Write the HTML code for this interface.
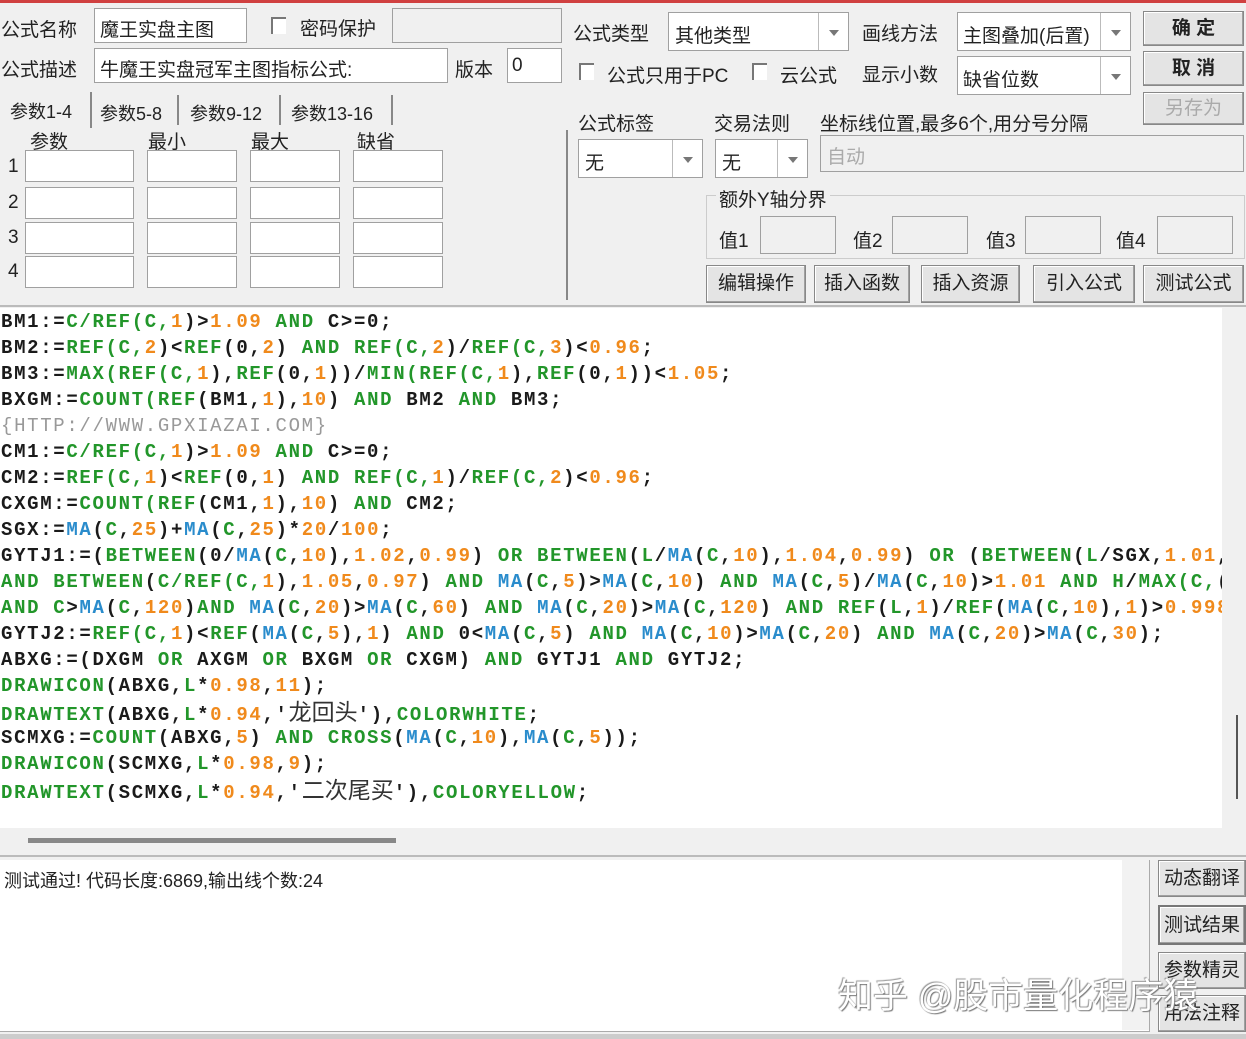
<!DOCTYPE html>
<html><head><meta charset="utf-8"><style>
*{margin:0;padding:0;box-sizing:border-box}
body{width:1246px;height:1039px;background:#f0f0f0;position:relative;overflow:hidden;font-family:"Liberation Sans","Noto Sans CJK SC",sans-serif;font-size:19px;color:#222}
.a{position:absolute}
.in{position:absolute;background:#fff;border:1px solid #a0a0a0}
.lb{position:absolute;white-space:nowrap;font-size:19px}
.btn{position:absolute;background:#e4e4e4;border:1px solid #888;box-shadow:inset -1px -1px 0 #a0a0a0,inset 1px 1px 0 #fff;text-align:center;font-size:19px;white-space:nowrap}
.cb{position:absolute;width:15px;height:17px;border-left:2px solid #777;border-top:2px solid #777;background:#fff}
.dd{position:absolute;right:0;top:0;bottom:0;width:30px;border-left:1px solid #bbb}
.dd:after{content:"";position:absolute;left:10px;top:50%;margin-top:-2px;border:5px solid transparent;border-top:6px solid #777}
#code{position:absolute;left:0;top:308px;width:1222px;height:520px;background:#fff;overflow:hidden}
#code div{position:absolute;left:1px;white-space:pre;font-family:"Liberation Mono",monospace;font-weight:bold;font-size:19px;letter-spacing:1.67px;color:#1a1a1a;line-height:26px}
.g{color:#22962a}.o{color:#f08a1c}.b{color:#2a8ccc}
#code .y{color:#999;font-weight:normal}
.z{font-family:"Liberation Sans","Noto Sans CJK SC",sans-serif;font-weight:normal;letter-spacing:0;font-size:23px;color:#333}
</style></head><body>
<div class="a" style="left:0;top:0;width:1246px;height:3px;background:#d04040"></div>

<div class="lb" style="left:1px;top:15px">公式名称</div>
<div class="in" style="left:94px;top:8px;width:153px;height:35px"><span class="lb" style="left:5px;top:6px">魔王实盘主图</span></div>
<div class="cb" style="left:271px;top:17px"></div>
<div class="lb" style="left:300px;top:14px">密码保护</div>
<div class="in" style="left:392px;top:8px;width:170px;height:35px;background:#f0f0f0"></div>
<div class="lb" style="left:1px;top:55px">公式描述</div>
<div class="in" style="left:94px;top:48px;width:354px;height:35px"><span class="lb" style="left:5px;top:6px">牛魔王实盘冠军主图指标公式:</span></div>
<div class="lb" style="left:455px;top:55px">版本</div>
<div class="in" style="left:507px;top:48px;width:55px;height:35px"><span class="lb" style="left:4px;top:6px">0</span></div>

<div class="lb" style="left:10px;top:98px;font-size:18px">参数1-4</div>
<div class="a" style="left:90px;top:92px;width:2px;height:36px;background:#888"></div>
<div class="lb" style="left:100px;top:100px;font-size:18px">参数5-8</div>
<div class="a" style="left:177px;top:95px;width:2px;height:30px;background:#888"></div>
<div class="lb" style="left:190px;top:100px;font-size:18px">参数9-12</div>
<div class="a" style="left:279px;top:95px;width:2px;height:30px;background:#888"></div>
<div class="lb" style="left:291px;top:100px;font-size:18px">参数13-16</div>
<div class="a" style="left:391px;top:95px;width:2px;height:30px;background:#888"></div>
<div class="a" style="left:566px;top:130px;width:2px;height:170px;background:#888"></div>
<div class="lb" style="left:30px;top:127px">参数</div>
<div class="lb" style="left:148px;top:127px">最小</div>
<div class="lb" style="left:251px;top:127px">最大</div>
<div class="lb" style="left:357px;top:127px">缺省</div>
<div class="lb" style="left:8px;top:156px">1</div><div class="lb" style="left:8px;top:192px">2</div><div class="lb" style="left:8px;top:227px">3</div><div class="lb" style="left:8px;top:261px">4</div>
<div class="in" style="left:25px;top:150px;width:109px;height:32px"></div><div class="in" style="left:147px;top:150px;width:90px;height:32px"></div><div class="in" style="left:250px;top:150px;width:90px;height:32px"></div><div class="in" style="left:353px;top:150px;width:90px;height:32px"></div>
<div class="in" style="left:25px;top:187px;width:109px;height:32px"></div><div class="in" style="left:147px;top:187px;width:90px;height:32px"></div><div class="in" style="left:250px;top:187px;width:90px;height:32px"></div><div class="in" style="left:353px;top:187px;width:90px;height:32px"></div>
<div class="in" style="left:25px;top:222px;width:109px;height:32px"></div><div class="in" style="left:147px;top:222px;width:90px;height:32px"></div><div class="in" style="left:250px;top:222px;width:90px;height:32px"></div><div class="in" style="left:353px;top:222px;width:90px;height:32px"></div>
<div class="in" style="left:25px;top:256px;width:109px;height:32px"></div><div class="in" style="left:147px;top:256px;width:90px;height:32px"></div><div class="in" style="left:250px;top:256px;width:90px;height:32px"></div><div class="in" style="left:353px;top:256px;width:90px;height:32px"></div>

<div class="lb" style="left:573px;top:19px">公式类型</div>
<div class="in" style="left:668px;top:12px;width:181px;height:39px"><span class="lb" style="left:6px;top:8px">其他类型</span><div class="dd"></div></div>
<div class="lb" style="left:862px;top:19px">画线方法</div>
<div class="in" style="left:957px;top:12px;width:174px;height:39px"><span class="lb" style="left:5px;top:8px">主图叠加(后置)</span><div class="dd"></div></div>
<div class="cb" style="left:579px;top:63px"></div>
<div class="lb" style="left:607px;top:61px">公式只用于PC</div>
<div class="cb" style="left:752px;top:63px"></div>
<div class="lb" style="left:780px;top:61px">云公式</div>
<div class="lb" style="left:862px;top:60px">显示小数</div>
<div class="in" style="left:957px;top:56px;width:174px;height:39px"><span class="lb" style="left:5px;top:8px">缺省位数</span><div class="dd"></div></div>
<div class="btn" style="left:1143px;top:11px;width:101px;height:35px;line-height:33px;font-weight:bold">确 定</div>
<div class="btn" style="left:1143px;top:51px;width:101px;height:35px;line-height:33px;font-weight:bold">取 消</div>
<div class="btn" style="left:1143px;top:92px;width:101px;height:33px;line-height:31px;color:#aaa">另存为</div>

<div class="lb" style="left:578px;top:109px">公式标签</div>
<div class="lb" style="left:714px;top:109px">交易法则</div>
<div class="lb" style="left:820px;top:109px">坐标线位置,最多6个,用分号分隔</div>
<div class="in" style="left:578px;top:139px;width:125px;height:39px"><span class="lb" style="left:6px;top:8px">无</span><div class="dd"></div></div>
<div class="in" style="left:715px;top:139px;width:93px;height:39px"><span class="lb" style="left:6px;top:8px">无</span><div class="dd"></div></div>
<div class="in" style="left:820px;top:135px;width:424px;height:37px;background:#f0f0f0"><span class="lb" style="left:6px;top:6px;color:#aaa">自动</span></div>
<div class="a" style="left:706px;top:195px;width:539px;height:64px;border:1px solid #ccc"></div>
<div class="lb" style="left:716px;top:185px;background:#f0f0f0;padding:0 3px">额外Y轴分界</div>
<div class="lb" style="left:719px;top:226px">值1</div><div class="in" style="left:760px;top:216px;width:76px;height:38px;background:#f0f0f0"></div>
<div class="lb" style="left:853px;top:226px">值2</div><div class="in" style="left:892px;top:216px;width:76px;height:38px;background:#f0f0f0"></div>
<div class="lb" style="left:986px;top:226px">值3</div><div class="in" style="left:1025px;top:216px;width:76px;height:38px;background:#f0f0f0"></div>
<div class="lb" style="left:1116px;top:226px">值4</div><div class="in" style="left:1157px;top:216px;width:76px;height:38px;background:#f0f0f0"></div>
<div class="btn" style="left:706px;top:265px;width:100px;height:38px;line-height:36px">编辑操作</div>
<div class="btn" style="left:814px;top:265px;width:96px;height:38px;line-height:36px">插入函数</div>
<div class="btn" style="left:921px;top:265px;width:99px;height:38px;line-height:36px">插入资源</div>
<div class="btn" style="left:1033px;top:265px;width:102px;height:38px;line-height:36px">引入公式</div>
<div class="btn" style="left:1143px;top:265px;width:101px;height:38px;line-height:36px">测试公式</div>
<div class="a" style="left:0;top:305px;width:1246px;height:2px;background:#bbb"></div>

<div id="code">
<div style="top:1px">BM1:=<span class="g">C/REF(C,</span><span class="o">1</span>)&gt;<span class="o">1.09</span> <span class="g">AND</span> C&gt;=0;</div>
<div style="top:27px">BM2:=<span class="g">REF(C,</span><span class="o">2</span>)&lt;<span class="g">REF</span>(0,<span class="o">2</span>) <span class="g">AND REF(C,</span><span class="o">2</span>)/<span class="g">REF(C,</span><span class="o">3</span>)&lt;<span class="o">0.96</span>;</div>
<div style="top:53px">BM3:=<span class="g">MAX(REF(C,</span><span class="o">1</span>),<span class="g">REF</span>(0,<span class="o">1</span>))/<span class="g">MIN(REF(C,</span><span class="o">1</span>),<span class="g">REF</span>(0,<span class="o">1</span>))&lt;<span class="o">1.05</span>;</div>
<div style="top:79px">BXGM:=<span class="g">COUNT(REF</span>(BM1,<span class="o">1</span>),<span class="o">10</span>) <span class="g">AND</span> BM2 <span class="g">AND</span> BM3;</div>
<div style="top:105px" class="y">{HTTP://WWW.GPXIAZAI.COM}</div>
<div style="top:131px">CM1:=<span class="g">C/REF(C,</span><span class="o">1</span>)&gt;<span class="o">1.09</span> <span class="g">AND</span> C&gt;=0;</div>
<div style="top:157px">CM2:=<span class="g">REF(C,</span><span class="o">1</span>)&lt;<span class="g">REF</span>(0,<span class="o">1</span>) <span class="g">AND REF(C,</span><span class="o">1</span>)/<span class="g">REF(C,</span><span class="o">2</span>)&lt;<span class="o">0.96</span>;</div>
<div style="top:183px">CXGM:=<span class="g">COUNT(REF</span>(CM1,<span class="o">1</span>),<span class="o">10</span>) <span class="g">AND</span> CM2;</div>
<div style="top:209px">SGX:=<span class="b">MA</span>(<span class="g">C</span>,<span class="o">25</span>)+<span class="b">MA</span>(<span class="g">C</span>,<span class="o">25</span>)*<span class="o">20</span>/<span class="o">100</span>;</div>
<div style="top:235px">GYTJ1:=(<span class="g">BETWEEN</span>(0/<span class="b">MA</span>(<span class="g">C</span>,<span class="o">10</span>),<span class="o">1.02</span>,<span class="o">0.99</span>) <span class="g">OR BETWEEN</span>(<span class="g">L</span>/<span class="b">MA</span>(<span class="g">C</span>,<span class="o">10</span>),<span class="o">1.04</span>,<span class="o">0.99</span>) <span class="g">OR</span> (<span class="g">BETWEEN</span>(<span class="g">L</span>/SGX,<span class="o">1.01</span>,</div>
<div style="top:261px"><span class="g">AND BETWEEN</span>(<span class="g">C/REF(C,</span><span class="o">1</span>),<span class="o">1.05</span>,<span class="o">0.97</span>) <span class="g">AND</span> <span class="b">MA</span>(<span class="g">C</span>,<span class="o">5</span>)&gt;<span class="b">MA</span>(<span class="g">C</span>,<span class="o">10</span>) <span class="g">AND</span> <span class="b">MA</span>(<span class="g">C</span>,<span class="o">5</span>)/<span class="b">MA</span>(<span class="g">C</span>,<span class="o">10</span>)&gt;<span class="o">1.01</span> <span class="g">AND H</span>/<span class="g">MAX(C,</span>(</div>
<div style="top:287px"><span class="g">AND C</span>&gt;<span class="b">MA</span>(<span class="g">C</span>,<span class="o">120</span>)<span class="g">AND</span> <span class="b">MA</span>(<span class="g">C</span>,<span class="o">20</span>)&gt;<span class="b">MA</span>(<span class="g">C</span>,<span class="o">60</span>) <span class="g">AND</span> <span class="b">MA</span>(<span class="g">C</span>,<span class="o">20</span>)&gt;<span class="b">MA</span>(<span class="g">C</span>,<span class="o">120</span>) <span class="g">AND REF</span>(<span class="g">L</span>,<span class="o">1</span>)/<span class="g">REF</span>(<span class="b">MA</span>(<span class="g">C</span>,<span class="o">10</span>),<span class="o">1</span>)&gt;<span class="o">0.998</span></div>
<div style="top:313px">GYTJ2:=<span class="g">REF(C,</span><span class="o">1</span>)&lt;<span class="g">REF</span>(<span class="b">MA</span>(<span class="g">C</span>,<span class="o">5</span>),<span class="o">1</span>) <span class="g">AND</span> 0&lt;<span class="b">MA</span>(<span class="g">C</span>,<span class="o">5</span>) <span class="g">AND</span> <span class="b">MA</span>(<span class="g">C</span>,<span class="o">10</span>)&gt;<span class="b">MA</span>(<span class="g">C</span>,<span class="o">20</span>) <span class="g">AND</span> <span class="b">MA</span>(<span class="g">C</span>,<span class="o">20</span>)&gt;<span class="b">MA</span>(<span class="g">C</span>,<span class="o">30</span>);</div>
<div style="top:339px">ABXG:=(DXGM <span class="g">OR</span> AXGM <span class="g">OR</span> BXGM <span class="g">OR</span> CXGM) <span class="g">AND</span> GYTJ1 <span class="g">AND</span> GYTJ2;</div>
<div style="top:365px"><span class="g">DRAWICON</span>(ABXG,<span class="g">L</span>*<span class="o">0.98</span>,<span class="o">11</span>);</div>
<div style="top:391px"><span class="g">DRAWTEXT</span>(ABXG,<span class="g">L</span>*<span class="o">0.94</span>,'<span class="z">龙回头</span>'),<span class="g">COLORWHITE</span>;</div>
<div style="top:417px">SCMXG:=<span class="g">COUNT</span>(ABXG,<span class="o">5</span>) <span class="g">AND CROSS</span>(<span class="b">MA</span>(<span class="g">C</span>,<span class="o">10</span>),<span class="b">MA</span>(<span class="g">C</span>,<span class="o">5</span>));</div>
<div style="top:443px"><span class="g">DRAWICON</span>(SCMXG,<span class="g">L</span>*<span class="o">0.98</span>,<span class="o">9</span>);</div>
<div style="top:469px"><span class="g">DRAWTEXT</span>(SCMXG,<span class="g">L</span>*<span class="o">0.94</span>,'<span class="z">二次尾买</span>'),<span class="g">COLORYELLOW</span>;</div>
</div>
<div class="a" style="left:1236px;top:715px;width:2px;height:84px;background:#555"></div>
<div class="a" style="left:28px;top:838px;width:368px;height:5px;background:#888"></div>
<div class="a" style="left:0;top:855px;width:1246px;height:2px;background:#bbb"></div>

<div class="a" style="left:0;top:860px;width:1150px;height:172px;background:#fff;border-right:1px solid #aaa;border-bottom:1px solid #aaa"></div>
<div class="a" style="left:1122px;top:860px;width:27px;height:170px;background:#f2f2f2"></div>
<div class="lb" style="left:4px;top:867px;font-size:18px">测试通过! 代码长度:6869,输出线个数:24</div>
<div class="btn" style="left:1158px;top:860px;width:88px;height:37px;line-height:35px">动态翻译</div>
<div class="btn" style="left:1158px;top:905px;width:88px;height:40px;line-height:38px;border:2px solid #777">测试结果</div>
<div class="btn" style="left:1158px;top:952px;width:88px;height:37px;line-height:35px">参数精灵</div>
<div class="btn" style="left:1158px;top:995px;width:88px;height:37px;line-height:35px">用法注释</div>
<div class="lb" style="left:838px;top:968px;font-size:35px;color:#fff;text-shadow:1px 1px 1px #777,-1px -1px 1px #999">知乎 @股市量化程序猿</div>
<div class="a" style="left:0;top:1034px;width:1246px;height:5px;background:#ccc"></div>
</body></html>
